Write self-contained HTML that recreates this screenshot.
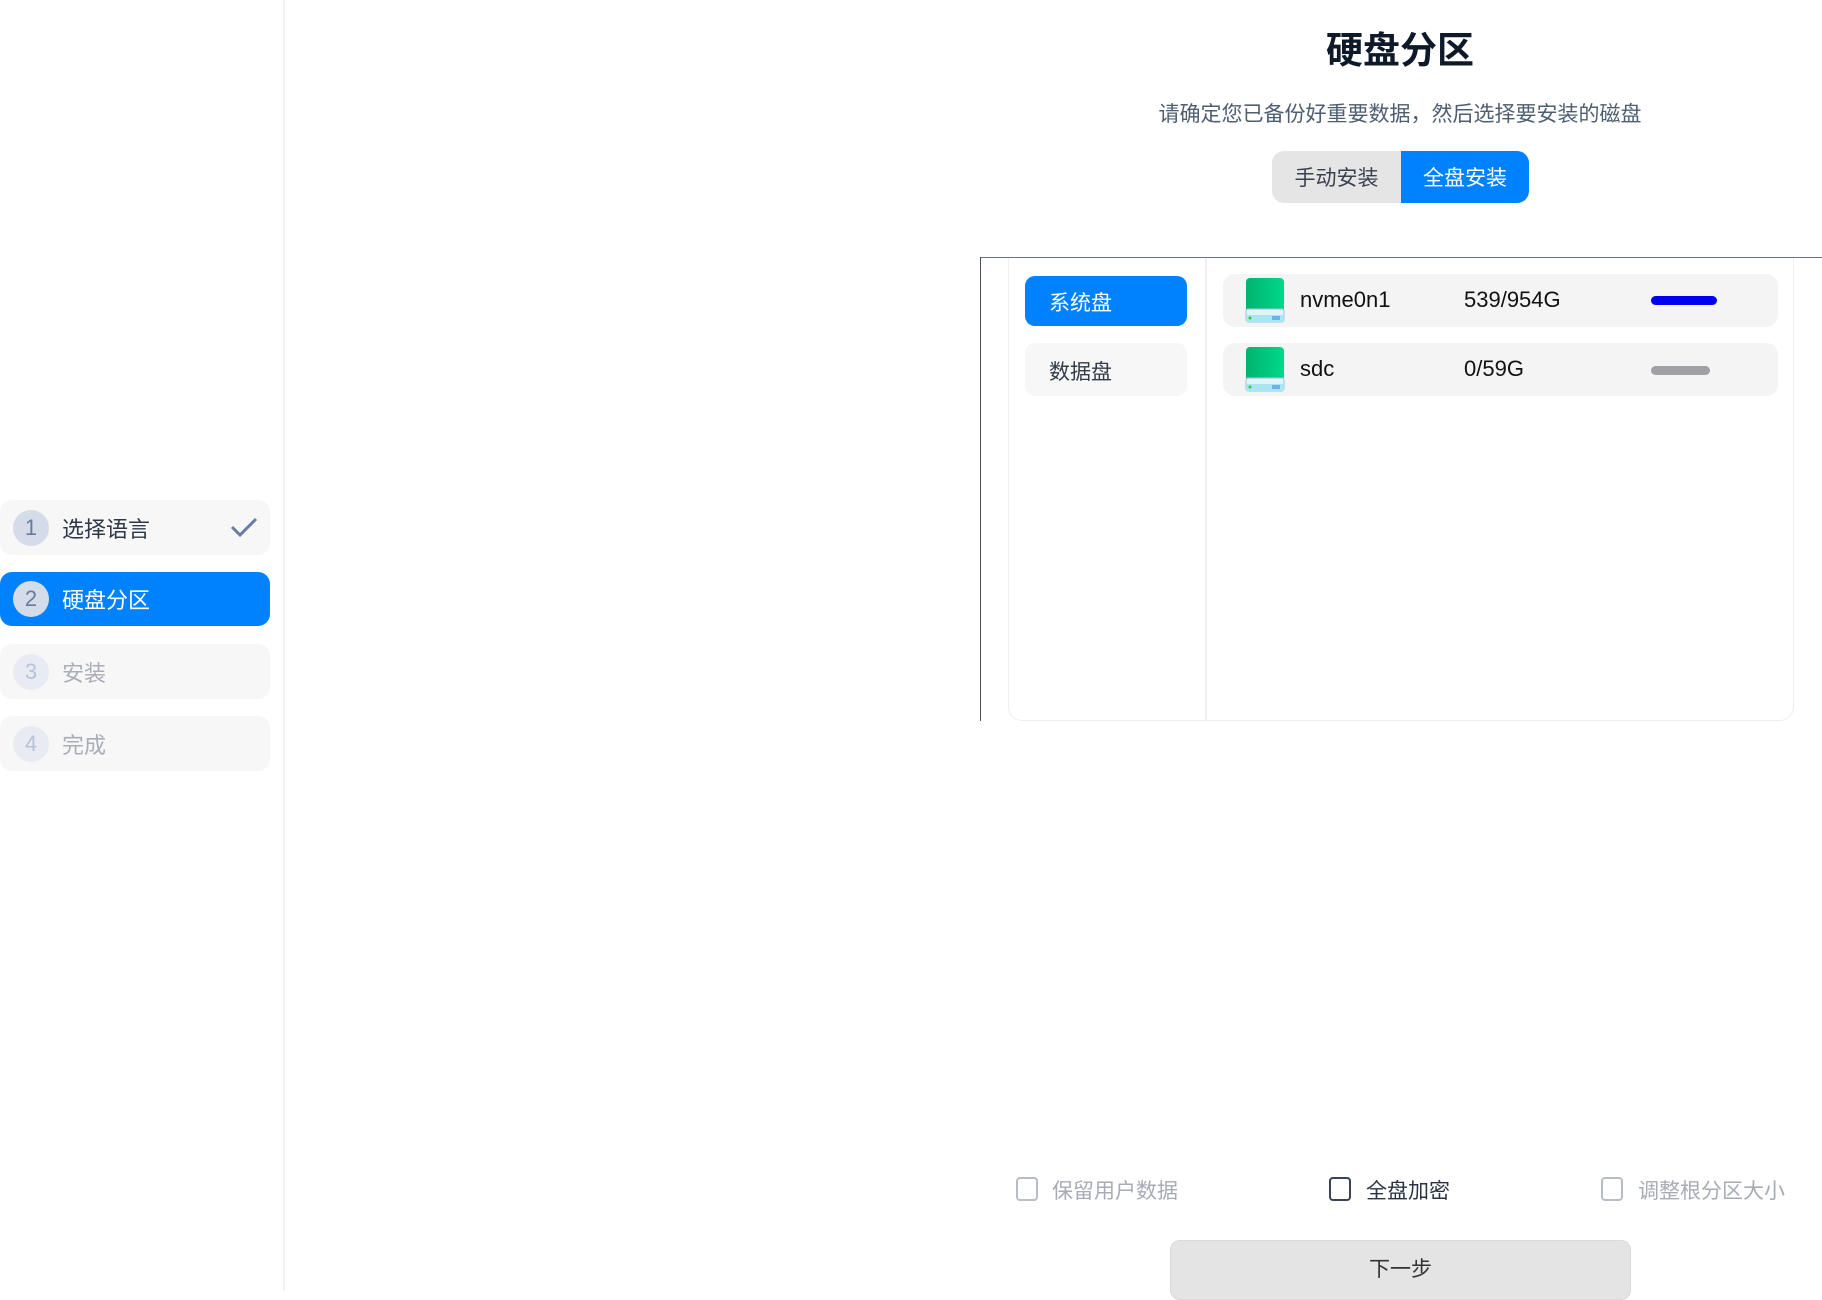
<!DOCTYPE html>
<html><head><meta charset="utf-8"><style>
*{box-sizing:border-box;margin:0;padding:0}
body{width:1822px;height:1290px;overflow:hidden;background:#fff;font-family:"Liberation Sans","Noto Sans CJK SC",sans-serif;position:relative}
.a{position:absolute}
.side{left:0;top:0;width:285px;height:1290px;border-right:2px solid #f1f2f4}
.step{left:0;width:270px;height:55px;border-radius:12px;background:#f7f7f8;display:flex;align-items:center;font-size:22px}
.circ{width:36px;height:36px;border-radius:50%;margin-left:13px;margin-right:13px;display:flex;align-items:center;justify-content:center;font-size:22px}
.row{background:#f4f4f4;border-radius:12px;height:53px}
.cb{width:22px;height:24px;border:2px solid #b8bcc6;border-radius:4px}
.ct{font-size:21px;color:#a8abb6}
</style></head><body>
<div class="a side"></div>
<div class="a step" style="top:500px;color:#2f3848"><div class="circ" style="background:#d4dbe9;color:#6a7ba0">1</div>选择语言
<svg class="a" style="left:230px;top:16px" width="28" height="22" viewBox="0 0 28 22"><path d="M2 11 L10 19 L26 3" fill="none" stroke="#6a7ba8" stroke-width="3"/></svg></div>
<div class="a step" style="top:572px;height:54px;background:#0082ff;color:#fff"><div class="circ" style="background:#d4dbe9;color:#6a7ba0">2</div>硬盘分区</div>
<div class="a step" style="top:644px;color:#a9adb8"><div class="circ" style="background:#e8ebf2;color:#b8c2d8">3</div>安装</div>
<div class="a step" style="top:716px;color:#a9adb8"><div class="circ" style="background:#e8ebf2;color:#b8c2d8">4</div>完成</div>

<div class="a" style="left:1200px;width:400px;top:20px;text-align:center;font-size:37px;font-weight:bold;color:#0e1a2a">硬盘分区</div>
<div class="a" style="left:1000px;width:800px;top:98px;text-align:center;font-size:21px;color:#4d5e72">请确定您已备份好重要数据，然后选择要安装的磁盘</div>
<div class="a" style="left:1272px;top:151px;width:257px;height:52px;border-radius:12px;overflow:hidden;display:flex;font-size:21px">
<div style="width:129px;background:#e5e5e6;color:#3a4050;display:flex;align-items:center;justify-content:center">手动安装</div>
<div style="flex:1;background:#0082ff;color:#fff;display:flex;align-items:center;justify-content:center">全盘安装</div></div>

<div class="a" style="left:980px;top:257px;width:842px;height:1px;background:#6a7080"></div>
<div class="a" style="left:980px;top:257px;width:1px;height:464px;background:#4a5060"></div>
<div class="a" style="left:1008px;top:258px;width:786px;height:463px;border:1.5px solid #eeeeee;border-top:none;border-radius:0 0 14px 14px"></div>
<div class="a" style="left:1205px;top:258px;width:2px;height:463px;background:#efefef"></div>
<div class="a" style="left:1025px;top:276px;width:162px;height:50px;border-radius:10px;background:#0082ff;color:#fff;font-size:21px;padding:11px 0 0 24px">系统盘</div>
<div class="a" style="left:1025px;top:343px;width:162px;height:53px;border-radius:10px;background:#f7f7f7;color:#333b48;font-size:21px;padding:13px 0 0 24px">数据盘</div>

<div class="a row" style="left:1223px;top:274px;width:555px"></div>
<div class="a row" style="left:1223px;top:343px;width:555px"></div>
<svg class="a" style="left:1245px;top:277px" width="40" height="46" viewBox="0 0 40 46"><defs><linearGradient id="g" x1="0" x2="1"><stop offset="0" stop-color="#00b46e"/><stop offset="1" stop-color="#00d88a"/></linearGradient></defs><rect x="1" y="1" width="38" height="44" rx="4" fill="url(#g)"/><rect x="1" y="32" width="38" height="13" rx="2" fill="#dff4f6" stroke="#b0bde0"/><rect x="1" y="38" width="38" height="7" fill="#a8e6f4"/><circle cx="5" cy="41" r="1.5" fill="#3c3"/><path d="M28 39v4M30 39v4M32 39v4M34 39v4" stroke="#2e7de0"/></svg>
<svg class="a" style="left:1245px;top:346px" width="40" height="46" viewBox="0 0 40 46"><rect x="1" y="1" width="38" height="44" rx="4" fill="url(#g)"/><rect x="1" y="32" width="38" height="13" rx="2" fill="#dff4f6" stroke="#b0bde0"/><rect x="1" y="38" width="38" height="7" fill="#a8e6f4"/><circle cx="5" cy="41" r="1.5" fill="#3c3"/><path d="M28 39v4M30 39v4M32 39v4M34 39v4" stroke="#2e7de0"/></svg>
<div class="a" style="left:1300px;top:287px;font-size:22px;color:#111">nvme0n1</div>
<div class="a" style="left:1464px;top:287px;font-size:22px;color:#111">539/954G</div>
<div class="a" style="left:1651px;top:296px;width:66px;height:9px;border-radius:5px;background:#0000f0"></div>
<div class="a" style="left:1300px;top:356px;font-size:22px;color:#111">sdc</div>
<div class="a" style="left:1464px;top:356px;font-size:22px;color:#111">0/59G</div>
<div class="a" style="left:1651px;top:366px;width:59px;height:9px;border-radius:5px;background:#a0a0a6"></div>

<div class="a cb" style="left:1016px;top:1177px"></div><div class="a ct" style="left:1052px;top:1175px">保留用户数据</div>
<div class="a cb" style="left:1329px;top:1177px;border-color:#3a4258"></div><div class="a ct" style="left:1366px;top:1175px;color:#2a3244">全盘加密</div>
<div class="a cb" style="left:1601px;top:1177px"></div><div class="a ct" style="left:1638px;top:1175px">调整根分区大小</div>
<div class="a" style="left:1170px;top:1240px;width:461px;height:60px;border-radius:10px;background:#e4e4e4;border:1px solid #d8d8d8;text-align:center;padding-top:12px;font-size:21px;color:#333">下一步</div>
</body></html>
